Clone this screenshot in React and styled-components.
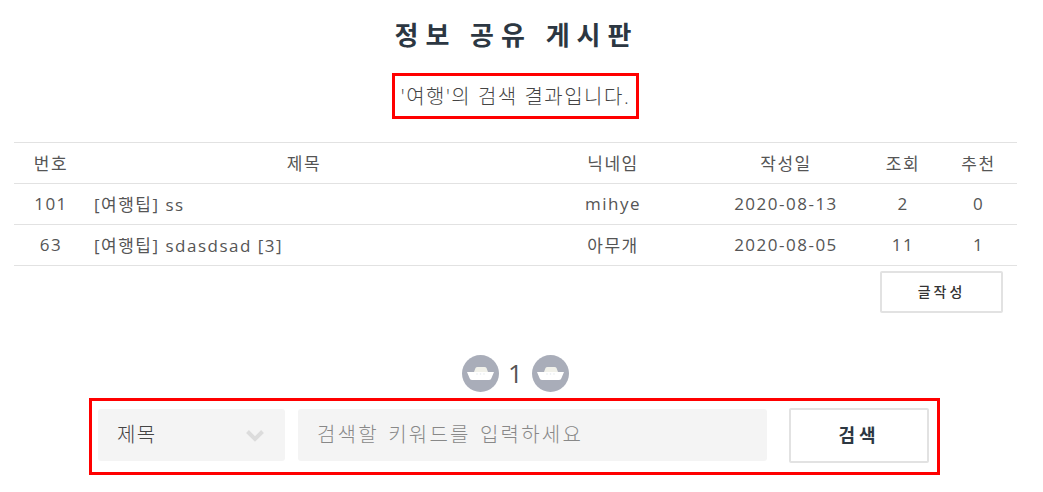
import React from 'react';
import styled, { createGlobalStyle } from 'styled-components';

const Global = createGlobalStyle`
  html, body { margin: 0; padding: 0; background: #fff; }
  body { font-family: "Open Sans", "Noto Sans CJK KR", sans-serif; color: #444; }
`;
const Page = styled.div`
  width: 1043px; height: 492px; overflow: hidden; box-sizing: border-box;
  padding: 0 26px 0 14px; display: flex; flex-direction: column;
`;
const Title = styled.h2`
  margin: 20px 0 0; height: 31px; line-height: 31px; text-align: center; padding-left: 2px;
  font-size: 26px; font-weight: 700; letter-spacing: 7px; color: #2c3742;
`;
const ResultWrap = styled.div`
  display: flex; justify-content: center; margin-top: 22px;
`;
const ResultBox = styled.div`
  width: 247px; height: 46px; box-sizing: border-box; border: 3px solid #f00; padding-bottom: 2px;
  display: flex; align-items: center; justify-content: center;
  font-size: 20px; font-weight: 300; letter-spacing: 1.5px; color: #444; white-space: nowrap;
`;
const Table = styled.div`
  margin-top: 23px; width: 1003px; border-top: 1px solid #e2e2e2;
`;
const Row = styled.div`
  display: grid; grid-template-columns: 74px 432px 186px 160px 74px 77px;
  height: 41px; box-sizing: border-box; border-bottom: 1px solid #e2e2e2; padding-bottom: 2px;
  align-items: center; font-size: 17px; font-weight: 400; letter-spacing: 1.5px; color: #555;
`;
const Cell = styled.div`
  text-align: ${p => p.$left ? 'left' : 'center'};
  padding-left: ${p => p.$left ? '6px' : '0'};
  white-space: nowrap;
`;
const WriteRow = styled.div`
  display: flex; justify-content: flex-end; width: 989px; margin-top: 5px;
`;
const WriteButton = styled.button`
  width: 123px; height: 42px; box-sizing: border-box; background: #fff;
  border: 2px solid #e2e2e2; border-radius: 2px; font: inherit; font-size: 14px; font-weight: 500;
  letter-spacing: 3px; color: #333; padding: 0 0 2px;
`;
const Pager = styled.div`
  margin-top: 41px; height: 38px; display: flex; align-items: center; justify-content: center;
  gap: 7px; font-size: 26px; font-weight: 400; color: #555; width: 1003px;
`;
const PageNum = styled.span`
  width: 19px; text-align: center; line-height: 38px;
`;
const SearchBar = styled.div`
  margin: 6px 0 0 75px; width: 851px; height: 77px; box-sizing: border-box; border: 3px solid #f00;
  display: flex; align-items: flex-start; padding: 8px 8px 0 6px;
`;
const SelectBox = styled.div`
  width: 187px; height: 52px; box-sizing: border-box; background: #f4f4f4; border-radius: 3px;
  display: flex; align-items: center; justify-content: space-between; padding: 0 20px 3px 19px;
  font-size: 20px; font-weight: 300; letter-spacing: 1.3px; color: #444;
`;
const SelectArrow = styled.span`
  display: flex; margin-top: 3px;
`;
const SearchInput = styled.div`
  width: 469px; height: 52px; box-sizing: border-box; margin-left: 13px; background: #f4f4f4; border-radius: 3px;
  display: flex; align-items: center; padding: 0 19px 4px;
  font-size: 20px; font-weight: 300; letter-spacing: 2.2px; word-spacing: 2px; color: #888; white-space: nowrap;
`;
const SearchButton = styled.button`
  width: 140px; height: 55px; box-sizing: border-box; margin: -1px 0 0 22px; background: #fff;
  border: 2px solid #e2e2e2; border-radius: 2px; font: inherit; font-size: 18px; font-weight: 700;
  letter-spacing: 4px; color: #2c3742; padding: 0 0 4px;
`;

const Ship = () => (
  <svg width="37" height="37" viewBox="0 0 37 37">
    <circle cx="18.5" cy="18.5" r="18.5" fill="#a9adb9" />
    <path d="M12 17 L13.5 13 Q14 12 15.5 12 H22.5 Q24 12 24.5 13 L26 17 Z" fill="#f1f1ea" />
    <path d="M5 17 H32 L29.5 23 Q29 25 27 25 H10 Q8 25 7.5 23 Z" fill="#fff" />
    <g fill="#e6ecf0">
      <circle cx="15" cy="19" r=".8" /><circle cx="18.5" cy="19" r=".8" /><circle cx="22" cy="19" r=".8" />
    </g>
  </svg>
);

const Chevron = () => (
  <svg width="20" height="14" viewBox="0 0 20 14">
    <path d="M2.5 3.5 L10 11 L17.5 3.5" fill="none" stroke="#dcdcdc" strokeWidth="4" />
  </svg>
);

const rows = [
  ['번호', '제목', '닉네임', '작성일', '조회', '추천'],
  ['101', '[여행팁] ss', 'mihye', '2020-08-13', '2', '0'],
  ['63', '[여행팁] sdasdsad [3]', '아무개', '2020-08-05', '11', '1'],
];

export default function App() {
  return (
    <Page>
      <Global />
      <Title>정보 공유 게시판</Title>
      <ResultWrap><ResultBox>'여행'의 검색 결과입니다.</ResultBox></ResultWrap>
      <Table>
        {rows.map((r, i) => (
          <Row key={i}>
            {r.map((c, j) => <Cell key={j} $left={i > 0 && j === 1}>{c}</Cell>)}
          </Row>
        ))}
      </Table>
      <WriteRow><WriteButton>글작성</WriteButton></WriteRow>
      <Pager><Ship /><PageNum>1</PageNum><Ship /></Pager>
      <SearchBar>
        <SelectBox>제목<SelectArrow><Chevron /></SelectArrow></SelectBox>
        <SearchInput>검색할 키워드를 입력하세요</SearchInput>
        <SearchButton>검색</SearchButton>
      </SearchBar>
    </Page>
  );
}
